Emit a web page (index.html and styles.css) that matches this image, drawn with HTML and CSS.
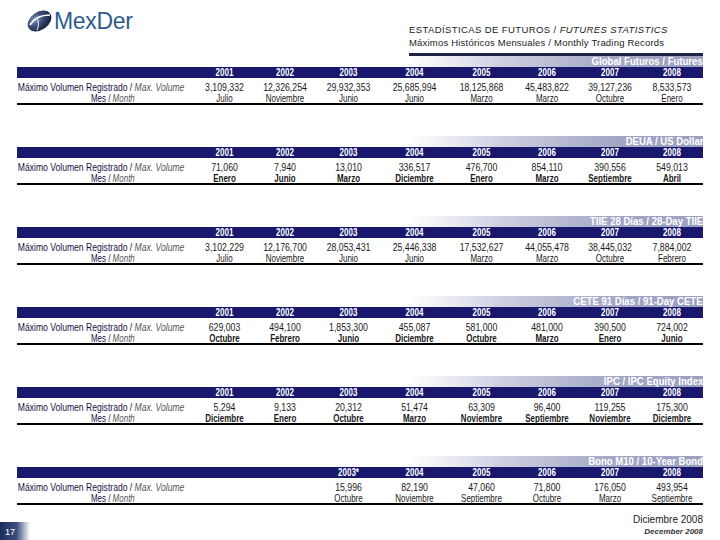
FILE: index.html
```html
<!DOCTYPE html>
<html lang="es">
<head>
<meta charset="utf-8">
<title>MexDer - Estadísticas de Futuros</title>
<link rel="stylesheet" href="styles.css">
</head>
<body>
<div class="page">
  <header class="top">
    <div class="logo">
      <svg class="logo-mark" width="27" height="26" viewBox="0 0 27 26">
        <defs>
          <radialGradient id="ball" cx="38%" cy="30%" r="75%">
            <stop offset="0" stop-color="#8a9cc0"/>
            <stop offset="0.45" stop-color="#3a4c76"/>
            <stop offset="1" stop-color="#121a38"/>
          </radialGradient>
        </defs>
        <ellipse cx="13.5" cy="13" rx="13" ry="9" transform="rotate(-35 13.5 13)" fill="url(#ball)"/>
        <path d="M4 17 C8 10 15 7 24 7" stroke="#ffffff" stroke-width="1.6" fill="none"/>
        <path d="M11 10 C13 14 13 18 11 22" stroke="#dde4f0" stroke-width="1.1" fill="none"/>
      </svg>
      <span class="logo-text">MexDer</span>
    </div>
    <div class="title">
      <div class="t1">ESTADÍSTICAS DE FUTUROS / <i>FUTURES STATISTICS</i></div>
      <div class="t2">Máximos Históricos Mensuales / Monthly Trading Records</div>
      <div class="rule"></div>
    </div>
  </header>

  <section class="block">
    <div class="band"><span>Global Futuros / Futures</span></div>
    <div class="grid head">
      <div></div><div>2001</div><div>2002</div><div>2003</div><div>2004</div><div>2005</div><div>2006</div><div>2007</div><div>2008</div>
    </div>
    <div class="grid vals">
      <div class="lbl">Máximo Volumen Registrado / <i>Max. Volume</i></div><div>3,109,332</div><div>12,326,254</div><div>29,932,353</div><div>25,685,994</div><div>18,125,868</div><div>45,483,822</div><div>39,127,236</div><div>8,533,573</div>
    </div>
    <div class="grid months">
      <div class="lbl2">Mes / <i>Month</i></div><div>Julio</div><div>Noviembre</div><div>Junio</div><div>Junio</div><div>Marzo</div><div>Marzo</div><div>Octubre</div><div>Enero</div>
    </div>
  </section>

  <section class="block">
    <div class="band"><span>DEUA / US Dollar</span></div>
    <div class="grid head">
      <div></div><div>2001</div><div>2002</div><div>2003</div><div>2004</div><div>2005</div><div>2006</div><div>2007</div><div>2008</div>
    </div>
    <div class="grid vals">
      <div class="lbl">Máximo Volumen Registrado / <i>Max. Volume</i></div><div>71,060</div><div>7,940</div><div>13,010</div><div>336,517</div><div>476,700</div><div>854,110</div><div>390,556</div><div>549,013</div>
    </div>
    <div class="grid months bold">
      <div class="lbl2">Mes / <i>Month</i></div><div>Enero</div><div>Junio</div><div>Marzo</div><div>Diciembre</div><div>Enero</div><div>Marzo</div><div>Septiembre</div><div>Abril</div>
    </div>
  </section>

  <section class="block">
    <div class="band"><span>TIIE 28 Días / 28-Day TIIE</span></div>
    <div class="grid head">
      <div></div><div>2001</div><div>2002</div><div>2003</div><div>2004</div><div>2005</div><div>2006</div><div>2007</div><div>2008</div>
    </div>
    <div class="grid vals">
      <div class="lbl">Máximo Volumen Registrado / <i>Max. Volume</i></div><div>3,102,229</div><div>12,176,700</div><div>28,053,431</div><div>25,446,338</div><div>17,532,627</div><div>44,055,478</div><div>38,445,032</div><div>7,884,002</div>
    </div>
    <div class="grid months">
      <div class="lbl2">Mes / <i>Month</i></div><div>Julio</div><div>Noviembre</div><div>Junio</div><div>Junio</div><div>Marzo</div><div>Marzo</div><div>Octubre</div><div>Febrero</div>
    </div>
  </section>

  <section class="block">
    <div class="band"><span>CETE 91 Días / 91-Day CETE</span></div>
    <div class="grid head">
      <div></div><div>2001</div><div>2002</div><div>2003</div><div>2004</div><div>2005</div><div>2006</div><div>2007</div><div>2008</div>
    </div>
    <div class="grid vals">
      <div class="lbl">Máximo Volumen Registrado / <i>Max. Volume</i></div><div>629,003</div><div>494,100</div><div>1,853,300</div><div>455,087</div><div>581,000</div><div>481,000</div><div>390,500</div><div>724,002</div>
    </div>
    <div class="grid months bold">
      <div class="lbl2">Mes / <i>Month</i></div><div>Octubre</div><div>Febrero</div><div>Junio</div><div>Diciembre</div><div>Octubre</div><div>Marzo</div><div>Enero</div><div>Junio</div>
    </div>
  </section>

  <section class="block">
    <div class="band"><span>IPC / IPC Equity Index</span></div>
    <div class="grid head">
      <div></div><div>2001</div><div>2002</div><div>2003</div><div>2004</div><div>2005</div><div>2006</div><div>2007</div><div>2008</div>
    </div>
    <div class="grid vals">
      <div class="lbl">Máximo Volumen Registrado / <i>Max. Volume</i></div><div>5,294</div><div>9,133</div><div>20,312</div><div>51,474</div><div>63,309</div><div>96,400</div><div>119,255</div><div>175,300</div>
    </div>
    <div class="grid months bold">
      <div class="lbl2">Mes / <i>Month</i></div><div>Diciembre</div><div>Enero</div><div>Octubre</div><div>Marzo</div><div>Noviembre</div><div>Septiembre</div><div>Noviembre</div><div>Diciembre</div>
    </div>
  </section>

  <section class="block">
    <div class="band"><span>Bono M10 / 10-Year Bond</span></div>
    <div class="grid head">
      <div></div><div></div><div></div><div>2003*</div><div>2004</div><div>2005</div><div>2006</div><div>2007</div><div>2008</div>
    </div>
    <div class="grid vals">
      <div class="lbl">Máximo Volumen Registrado / <i>Max. Volume</i></div><div></div><div></div><div>15,996</div><div>82,190</div><div>47,060</div><div>71,800</div><div>176,050</div><div>493,954</div>
    </div>
    <div class="grid months">
      <div class="lbl2">Mes / <i>Month</i></div><div></div><div></div><div>Octubre</div><div>Noviembre</div><div>Septiembre</div><div>Octubre</div><div>Marzo</div><div>Septiembre</div>
    </div>
  </section>

  <footer class="foot">
    <div class="pg">17</div>
    <div class="dates">
      <div class="d1">Diciembre 2008</div>
      <div class="d2">December 2008</div>
    </div>
  </footer>
</div>
</body>
</html>
```

FILE: styles.css
```css
* { box-sizing: border-box; }
html, body { margin: 0; padding: 0; background: #ffffff; }
body {
  width: 720px;
  height: 540px;
  overflow: hidden;
  font-family: "Liberation Sans", Arial, sans-serif;
  color: #111;
}
.page {
  display: flex;
  flex-direction: column;
  height: 540px;
}

/* header */
.top {
  display: flex;
  height: 56px;
}
.logo {
  display: flex;
  align-items: center;
  width: 409px;
  padding-left: 26px;
  height: 42px;
}
.logo-mark { display: block; margin-right: 1px; }
.logo-text {
  font-size: 23px;
  color: #2d5d8d;
  letter-spacing: -0.3px;
}
.title {
  display: flex;
  flex-direction: column;
  padding-top: 23px;
  width: 294px;
}
.t1, .t2 {
  font-size: 9.5px;
  line-height: 13px;
  color: #222;
}
.t1 { letter-spacing: 0.4px; }
.t2 { letter-spacing: 0.2px; }
.rule {
  margin-top: 4px;
  height: 3px;
  background: #1c2447;
}

/* sections */
.block {
  margin-left: 17px;
  width: 686px;
  margin-bottom: 31px;
  border-bottom: 2px solid #000;
}
.band {
  height: 11px;
  margin-left: 393px;
  background: linear-gradient(to right, #ffffff 0%, #c9cbde 35%, #a3a7c5 70%, #9ca0c0 100%);
  display: flex;
  justify-content: flex-end;
  align-items: center;
}
.band span {
  color: #ffffff;
  font-size: 11px;
  font-weight: bold;
  line-height: 11px;
  white-space: nowrap;
  transform: scaleX(0.87);
  transform-origin: right center;
}
.grid {
  display: grid;
  grid-template-columns: 178px 59px 62px 65px 67px 67px 64px 62px 62px;
  text-align: center;
  white-space: nowrap;
}
.grid > div {
  transform: scaleX(0.76);
  transform-origin: center center;
}
.head {
  background: #18186c;
  color: #ffffff;
  font-weight: bold;
  font-size: 10.5px;
  height: 11px;
  line-height: 11px;
}
.vals {
  margin-top: 3px;
  line-height: 12px;
  font-size: 11.5px;
  color: #1a1a1a;
}
.months {
  line-height: 10px;
  font-size: 10.5px;
  color: #1a1a1a;
}
.months.bold > div:not(.lbl2) { font-weight: bold; }
.grid > .lbl {
  text-align: left;
  padding-left: 1px;
  color: #141440;
  font-size: 11px;
  transform: scaleX(0.78);
  transform-origin: left center;
}
.grid > .lbl2 {
  text-align: center;
  padding-left: 18px;
  color: #141440;
}
.lbl i, .lbl2 i { color: #555; }

/* footer */
.foot {
  margin-top: -23px;
  display: flex;
  justify-content: space-between;
  align-items: flex-end;
  height: 33px;
}
.pg {
  width: 30px;
  height: 20px;
  padding: 5px 0 0 5px;
  font-size: 9px;
  color: #ffffff;
  background: linear-gradient(to right, #1d2c5e 0%, #3d4f80 55%, #ffffff 100%);
}
.dates {
  display: flex;
  flex-direction: column;
  align-items: flex-end;
  padding-right: 17px;
  padding-bottom: 5px;
}
.d1 {
  font-size: 10px;
  line-height: 14px;
  color: #222;
}
.d2 {
  font-size: 8px;
  line-height: 10px;
  font-style: italic;
  font-weight: bold;
  color: #333;
}
```
